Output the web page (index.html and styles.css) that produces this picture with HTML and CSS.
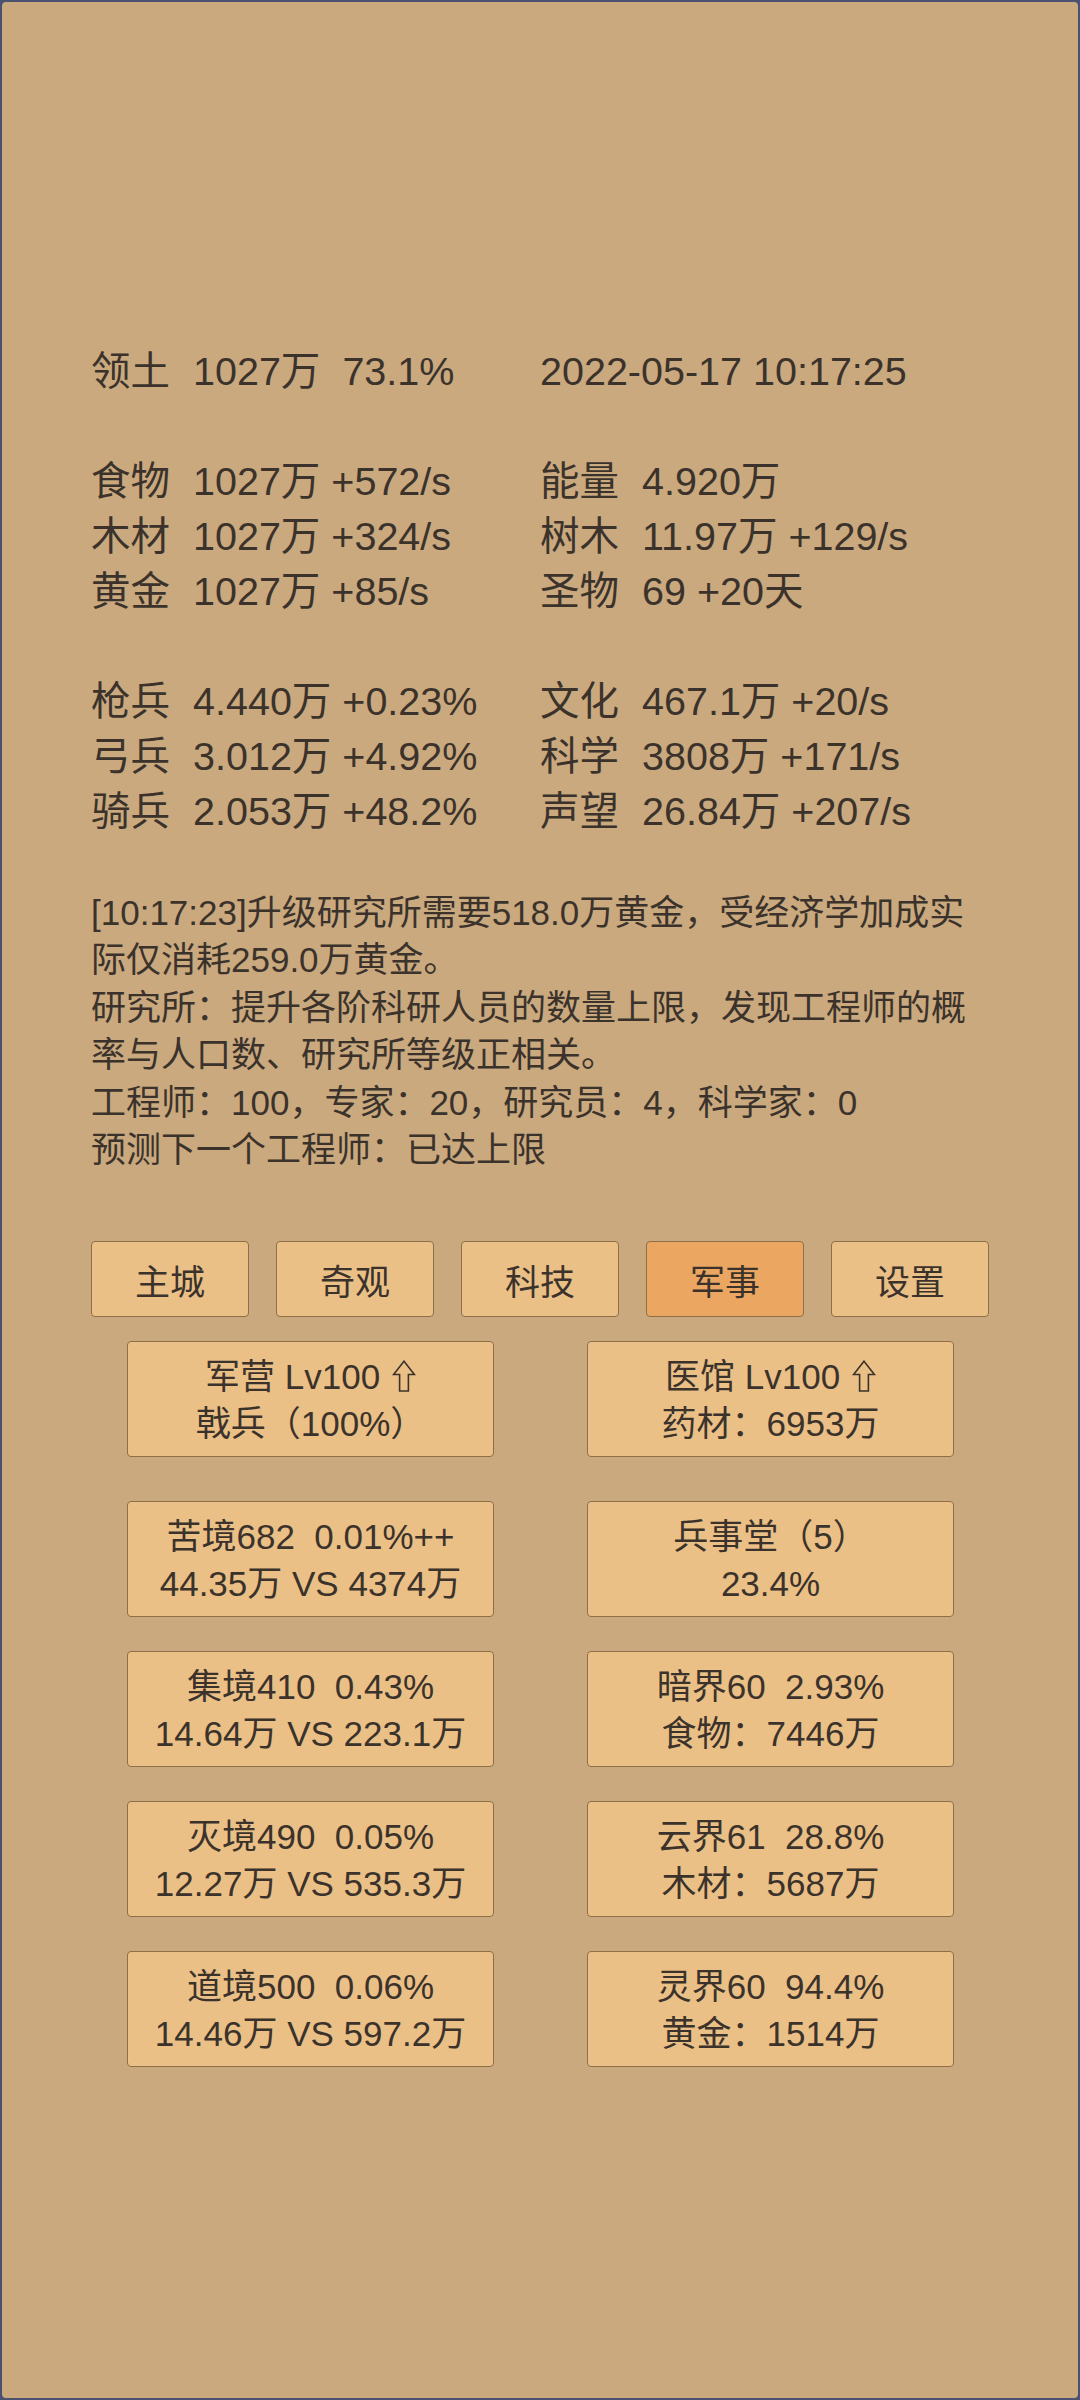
FILE: index.html
```html
<!DOCTYPE html>
<html lang="zh-CN">
<head>
<meta charset="utf-8">
<title>领土</title>
<link rel="stylesheet" href="styles.css">
</head>
<body>
<div class="screen">
  <div class="stats">
    <div class="cell"><span class="k">领土</span><span class="v">1027万<span class="pct">73.1%</span></span></div>
    <div class="cell"><span class="v">2022-05-17 10:17:25</span></div>
    <div class="blank"></div>
    <div class="cell"><span class="k">食物</span><span class="v">1027万 +572/s</span></div>
    <div class="cell"><span class="k">能量</span><span class="v">4.920万</span></div>
    <div class="cell"><span class="k">木材</span><span class="v">1027万 +324/s</span></div>
    <div class="cell"><span class="k">树木</span><span class="v">11.97万 +129/s</span></div>
    <div class="cell"><span class="k">黄金</span><span class="v">1027万 +85/s</span></div>
    <div class="cell"><span class="k">圣物</span><span class="v">69 +20天</span></div>
    <div class="blank"></div>
    <div class="cell"><span class="k">枪兵</span><span class="v">4.440万 +0.23%</span></div>
    <div class="cell"><span class="k">文化</span><span class="v">467.1万 +20/s</span></div>
    <div class="cell"><span class="k">弓兵</span><span class="v">3.012万 +4.92%</span></div>
    <div class="cell"><span class="k">科学</span><span class="v">3808万 +171/s</span></div>
    <div class="cell"><span class="k">骑兵</span><span class="v">2.053万 +48.2%</span></div>
    <div class="cell"><span class="k">声望</span><span class="v">26.84万 +207/s</span></div>
  </div>

  <div class="log">
    <p>[10:17:23]升级研究所需要518.0万黄金，受经济学加成实际仅消耗259.0万黄金。</p>
    <p>研究所：提升各阶科研人员的数量上限，发现工程师的概率与人口数、研究所等级正相关。</p>
    <p>工程师：100，专家：20，研究员：4，科学家：0</p>
    <p>预测下一个工程师：已达上限</p>
  </div>

  <div class="tabs">
    <div class="tab">主城</div>
    <div class="tab">奇观</div>
    <div class="tab">科技</div>
    <div class="tab active">军事</div>
    <div class="tab">设置</div>
  </div>

  <div class="cards top">
    <div class="card">
      <div>军营 Lv100 <svg class="up" viewBox="0 0 24 32" width="24" height="32"><polygon points="12,1.2 22.4,14.5 16.4,14.5 16.4,31 7.6,31 7.6,14.5 1.6,14.5"/></svg></div>
      <div>戟兵（100%）</div>
    </div>
    <div class="card">
      <div>医馆 Lv100 <svg class="up" viewBox="0 0 24 32" width="24" height="32"><polygon points="12,1.2 22.4,14.5 16.4,14.5 16.4,31 7.6,31 7.6,14.5 1.6,14.5"/></svg></div>
      <div>药材：6953万</div>
    </div>
  </div>

  <div class="cards list">
    <div class="card">
      <div>苦境682&nbsp; 0.01%++</div>
      <div>44.35万 VS 4374万</div>
    </div>
    <div class="card">
      <div>兵事堂（5）</div>
      <div>23.4%</div>
    </div>
    <div class="card">
      <div>集境410&nbsp; 0.43%</div>
      <div>14.64万 VS 223.1万</div>
    </div>
    <div class="card">
      <div>暗界60&nbsp; 2.93%</div>
      <div>食物：7446万</div>
    </div>
    <div class="card">
      <div>灭境490&nbsp; 0.05%</div>
      <div>12.27万 VS 535.3万</div>
    </div>
    <div class="card">
      <div>云界61&nbsp; 28.8%</div>
      <div>木材：5687万</div>
    </div>
    <div class="card">
      <div>道境500&nbsp; 0.06%</div>
      <div>14.46万 VS 597.2万</div>
    </div>
    <div class="card">
      <div>灵界60&nbsp; 94.4%</div>
      <div>黄金：1514万</div>
    </div>
  </div>
</div>
</body>
</html>
```

FILE: styles.css
```css
html, body {
  margin: 0;
  padding: 0;
}

body {
  background: #4b5170;
  font-family: "Liberation Sans", "Noto Sans CJK SC", sans-serif;
  color: #3b332b;
}

.screen {
  box-sizing: border-box;
  width: 1080px;
  height: 2400px;
  border: 2px solid #4b5170;
  border-radius: 6px;
  background: #caa97f;
  padding: 342px 89px 0;
}

.stats {
  display: grid;
  grid-template-columns: 1fr 1fr;
  grid-auto-rows: 55px;
  font-size: 39.5px;
  line-height: 55px;
  white-space: nowrap;
}

.blank {
  grid-column: 1 / -1;
}

.k {
  display: inline-block;
  width: 2em;
  margin-right: 23px;
}

.pct {
  margin-left: 22px;
}

.log {
  margin-top: 50px;
  font-size: 35px;
  line-height: 47.4px;
}

.log p {
  margin: 0;
}

.tabs {
  display: flex;
  gap: 27px;
  margin-top: 68px;
}

.tab {
  flex: 1;
  height: 76px;
  box-sizing: border-box;
  border: 1px solid #8d6f48;
  border-radius: 4px;
  background: #ebc087;
  display: flex;
  align-items: center;
  justify-content: center;
  font-size: 35px;
}

.tab.active {
  background: #eba761;
}

.cards {
  display: grid;
  grid-template-columns: 367px 367px;
  justify-content: space-between;
  padding: 0 35px 0 36px;
  row-gap: 34px;
}

.cards.top {
  margin-top: 24px;
}

.cards.list {
  margin-top: 44px;
}

.card {
  height: 116px;
  box-sizing: border-box;
  border: 1px solid #8d6f48;
  border-radius: 4px;
  background: #ebc087;
  text-align: center;
  font-size: 35px;
  line-height: 47px;
  padding-top: 11px;
  white-space: nowrap;
}

.up {
  vertical-align: -3px;
  margin-left: 2px;
}

.up polygon {
  fill: none;
  stroke: #3b332b;
  stroke-width: 1.6;
  stroke-linejoin: miter;
}
```
